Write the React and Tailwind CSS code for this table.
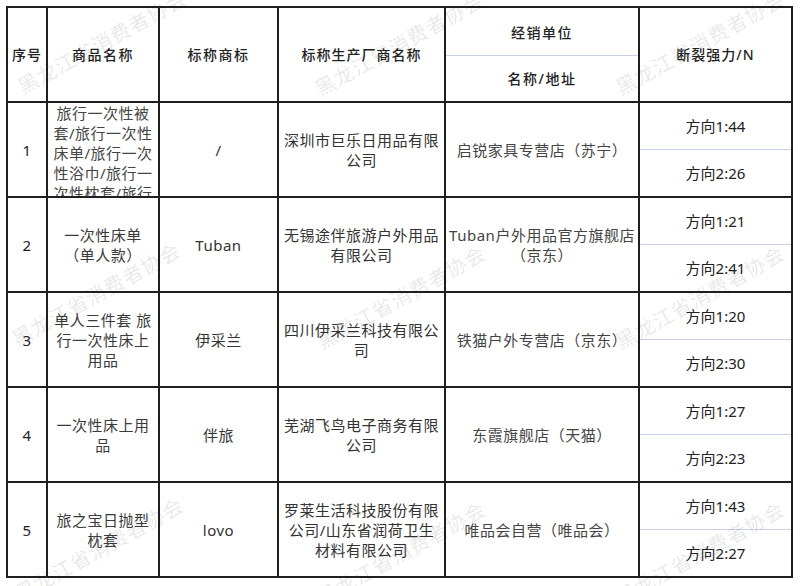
import React from 'react';

const ROWS = [
  {
    no: '1',
    name: ['旅行一次性被', '套/旅行一次性', '床单/旅行一次', '性浴巾/旅行一', '次性枕套/旅行'],
    clip: true,
    brand: '/',
    maker: ['深圳市巨乐日用品有限', '公司'],
    store: ['启锐家具专营店（苏宁）'],
    force: ['方向1:44', '方向2:26'],
  },
  {
    no: '2',
    name: ['一次性床单', '（单人款）'],
    brand: 'Tuban',
    maker: ['无锡途伴旅游户外用品', '有限公司'],
    store: ['Tuban户外用品官方旗舰店', '（京东）'],
    force: ['方向1:21', '方向2:41'],
  },
  {
    no: '3',
    name: ['单人三件套 旅', '行一次性床上', '用品'],
    brand: '伊采兰',
    maker: ['四川伊采兰科技有限公', '司'],
    store: ['铁猫户外专营店（京东）'],
    force: ['方向1:20', '方向2:30'],
  },
  {
    no: '4',
    name: ['一次性床上用', '品'],
    brand: '伴旅',
    maker: ['芜湖飞鸟电子商务有限', '公司'],
    store: ['东霞旗舰店（天猫）'],
    force: ['方向1:27', '方向2:23'],
  },
  {
    no: '5',
    name: ['旅之宝日抛型', '枕套'],
    brand: 'lovo',
    maker: ['罗莱生活科技股份有限', '公司/山东省润荷卫生', '材料有限公司'],
    store: ['唯品会自营（唯品会）'],
    force: ['方向1:43', '方向2:27'],
  },
];

// watermark centres, written out so tailwind picks them up
const MARKS = [
  'left-[102px] top-[42px]',
  'left-[399px] top-[44px]',
  'left-[700px] top-[43px]',
  'left-[96px] top-[294px]',
  'left-[401px] top-[297px]',
  'left-[700px] top-[297px]',
  'left-[99px] top-[549px]',
  'left-[401px] top-[553px]',
  'left-[700px] top-[553px]',
];

function Lines({ lines }) {
  return lines.map((line, i) => (
    <div key={i} className="whitespace-nowrap">{line}</div>
  ));
}

function Cell({ children, className = '' }) {
  return (
    <div className={`bg-white flex flex-col items-center justify-center text-center ${className}`}>
      {children}
    </div>
  );
}

export default function App() {
  return (
    <div className="relative w-[800px] h-[586px] bg-white overflow-hidden font-['Noto_Sans','Noto_Sans_CJK_SC',sans-serif] text-[#333]">
      <div className="ml-[6px] mt-[6px] w-[787px] grid grid-cols-[38px_110px_117px_165px_192px_151px] auto-rows-[93px] gap-[2px] p-[2px] bg-[#1f1f1f] text-[15px] leading-[20px] tracking-[0.5px]">
        {/* header */}
        <Cell className="text-[14px] font-medium text-[#222] tracking-[1px]">序号</Cell>
        <Cell className="text-[14px] font-medium text-[#222] tracking-[1.5px]">商品名称</Cell>
        <Cell className="text-[14px] font-medium text-[#222] tracking-[1.5px]">标称商标</Cell>
        <Cell className="text-[14px] font-medium text-[#222] tracking-[1px]">标称生产厂商名称</Cell>
        <div className="bg-white flex flex-col text-[14px] font-medium text-[#222] tracking-[1.5px]">
          <div className="flex-1 flex items-center justify-center pt-[2px]">经销单位</div>
          <div className="h-px bg-[#c8d2e6]" />
          <div className="flex-1 flex items-center justify-center">名称/地址</div>
        </div>
        <Cell className="text-[14px] font-medium text-[#222] tracking-[1px]">断裂强力/N</Cell>

        {ROWS.map((row) => (
          <React.Fragment key={row.no}>
            <Cell className="text-[#222]">{row.no}</Cell>
            {row.clip ? (
              <div className="bg-white overflow-hidden flex flex-col items-center text-[#444]">
                <Lines lines={row.name} />
              </div>
            ) : (
              <Cell className="text-[#3a3a3a]"><Lines lines={row.name} /></Cell>
            )}
            <Cell className="text-[#333]">{row.brand}</Cell>
            <Cell className="text-[#333]"><Lines lines={row.maker} /></Cell>
            <Cell className="text-[#444]"><Lines lines={row.store} /></Cell>
            <div className="bg-white flex flex-col text-[#222] tracking-normal">
              <div className="flex-1 flex items-center justify-center">{row.force[0]}</div>
              <div className="h-px bg-[#c8d2e6]" />
              <div className="flex-1 flex items-center justify-center">{row.force[1]}</div>
            </div>
          </React.Fragment>
        ))}
      </div>

      {/* watermark */}
      <div className="pointer-events-none absolute inset-0">
        {MARKS.map((pos) => (
          <span
            key={pos}
            className={`absolute ${pos} -translate-x-1/2 -translate-y-1/2 -rotate-[29deg] whitespace-nowrap text-[20px] tracking-[1px] text-black/10 font-['Noto_Sans_CJK_SC',sans-serif]`}
          >
            黑龙江省消费者协会
          </span>
        ))}
      </div>
    </div>
  );
}
